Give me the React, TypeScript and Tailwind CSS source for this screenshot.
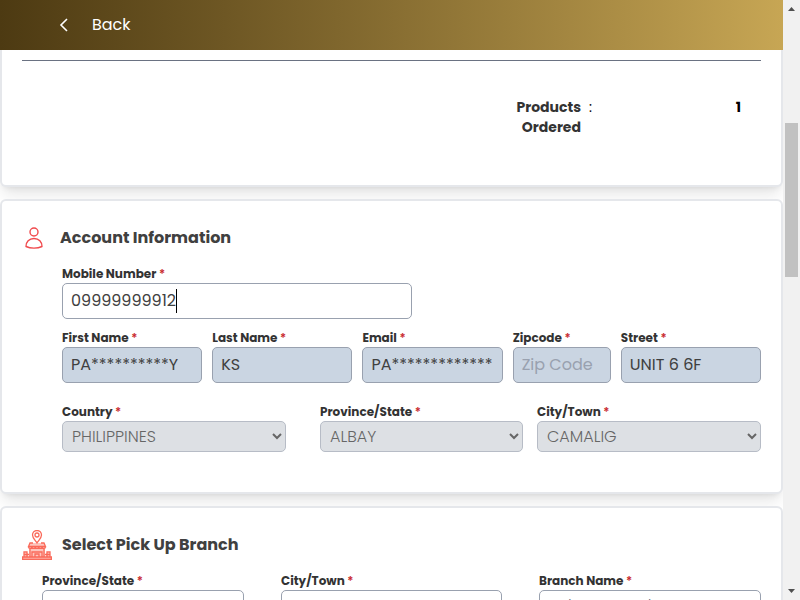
import type { ReactNode } from "react";

const INPUT =
  "h-9 w-full min-w-0 rounded-[5px] border border-gray-400 px-2 pb-0.5 text-base font-normal text-neutral-700 outline-none placeholder:text-gray-400";
const SELECT = "h-[31px] w-full min-w-0 rounded-[5px] border border-gray-400 pr-1.5 pl-[5px] text-base font-light";

function Field({ id, label, children }: { id: string; label: string; children: ReactNode }) {
  return (
    <div className="min-w-0">
      <label htmlFor={id} className="block h-[18px] text-xs leading-[18px] font-bold whitespace-nowrap text-[#333]">
        {label} <span className="font-semibold text-[#c8282d]">*</span>
      </label>
      {children}
    </div>
  );
}

function LockedInput({ id, label, value, placeholder }: { id: string; label: string; value: string; placeholder?: string }) {
  return (
    <Field id={id} label={label}>
      <input id={id} disabled value={value} placeholder={placeholder} className={`${INPUT} bg-slate-300`} />
    </Field>
  );
}

function LockedSelect({ id, label, value }: { id: string; label: string; value: string }) {
  return (
    <Field id={id} label={label}>
      <select id={id} disabled className={`${SELECT} bg-[#cfd3d9] text-neutral-800 opacity-70`}>
        <option>{value}</option>
      </select>
    </Field>
  );
}

function BranchSelect({ id, label, prompt }: { id: string; label: string; prompt: string }) {
  return (
    <Field id={id} label={label}>
      <select id={id} className={`${SELECT} bg-white text-gray-500`}>
        <option>{prompt}</option>
      </select>
    </Field>
  );
}

function UserIcon() {
  return (
    <svg viewBox="0 0 18 22" className="h-[22px] w-[18px]" fill="none" stroke="#f04a4d" strokeWidth="1.4" aria-hidden="true">
      <circle cx="9" cy="5" r="4" />
      <path d="M1 19.5c0-4.500 3-8 8-8s8 3.500 8 8c-4.500 2.200-11.500 2.200-16 0Z" strokeLinejoin="round" />
    </svg>
  );
}

function BranchIcon() {
  return (
    <svg viewBox="0 0 30 30" className="size-[30px]" fill="none" stroke="#fa6a5a" strokeWidth="1.300" aria-hidden="true">
      <path fill="#fdc5be" stroke="none" d="M7 17h16v10H7ZM2 23h4v4H2ZM24 23h4v4h-4ZM8 13h14l1.500 4h-17Z" />
      <path d="M15 13c-2-3-4.500-5-4.500-8a4.500 4.500 0 0 1 9 0c0 3-2.500 5-4.500 8Z" />
      <circle cx="15" cy="5" r="2" />
      <path d="M11 13H8l-1.500 3.500h17L22 13h-3" />
      <path d="M6.500 16.500c0 2.500 3.400 2.500 3.400 0 0 2.500 3.400 2.500 3.400 0 0 2.500 3.400 2.500 3.400 0 0 2.500 3.400 2.500 3.400 0 0 2.500 3.400 2.500 3.400 0" />
      <path d="M8 18.500v8.500m14-8.500v8.500M10 27v-5h10v5M13 27v-3h4v3" />
      <path d="M2 27v-5h3v5M25 27v-5h3v5M2 24.500h5m16 0h5" />
      <path fill="#fcb1a8" d="M.6 27h28.800v2.400H.6Z" />
    </svg>
  );
}

function Scrollbar() {
  return (
    <div className="flex w-[17px] shrink-0 flex-col items-center bg-[#f1f1f1]" aria-hidden="true">
      <svg viewBox="0 0 17 17" className="size-[17px]" fill="#505050">
        <path d="M5 11 8.500 7 12 11Z" />
      </svg>
      <div className="h-[106px]" />
      <div className="h-[154px] w-[13px] bg-[#c1c1c1]" />
      <div className="flex-1" />
      <svg viewBox="0 0 17 17" className="size-[17px]" fill="#505050">
        <path d="M5 6 8.500 10 12 6Z" />
      </svg>
    </div>
  );
}

const CARD = "rounded-md border-2 border-gray-200 bg-white shadow-lg";

export default function App() {
  return (
    <div className="flex h-screen overflow-hidden font-['Poppins','Inter',sans-serif]">
      <div className="flex min-w-0 flex-1 flex-col">
        <header className="flex h-[50px] shrink-0 items-center bg-linear-to-r from-[#4d3a12] to-[#c7a654] pl-14 text-white">
          <button type="button" className="flex items-center gap-5 text-base font-normal">
            <svg viewBox="0 0 16 16" className="size-4" fill="none" stroke="currentColor" strokeWidth="1.600" aria-hidden="true">
              <path d="m11 2-6 6 6 6" />
            </svg>
            Back
          </button>
        </header>

        <main className="flex min-h-0 flex-1 flex-col gap-3 overflow-hidden bg-white">
          <section className="shrink-0 rounded-b-md border-2 border-t-0 border-gray-200 bg-white px-5 pt-[10px] pb-12 shadow-lg">
            <hr className="border-gray-500" />
            <dl className="mt-9 flex justify-end pr-5 text-sm leading-5 font-bold">
              <dt className="w-20 text-right text-[#333]">Products Ordered</dt>
              <dd className="flex w-40 justify-between pl-2 text-black">
                <span className="font-normal">:</span>
                <span>1</span>
              </dd>
            </dl>
          </section>

          <section className={`${CARD} shrink-0 px-5 pt-[25px] pb-10`}>
            <h2 className="flex items-center gap-[17px] pl-[3px] text-base leading-6 font-bold text-neutral-700">
              <UserIcon />
              Account Information
            </h2>
            <div className="mt-[15px] ml-10 flex flex-col">
              <div className="w-1/2">
                <Field id="mobile" label="Mobile Number">
                  <div className="relative">
                    <input id="mobile" defaultValue="09999999912" className={`${INPUT} bg-white caret-transparent`} />
                    <span className="absolute top-1.5 left-[114px] h-6 w-px bg-black" aria-hidden="true" />
                  </div>
                </Field>
              </div>
              <div className="mt-[10px] grid grid-cols-[10fr_10fr_10fr_7fr_10fr] gap-[10px]">
                <LockedInput id="first-name" label="First Name" value="PA**********Y" />
                <LockedInput id="last-name" label="Last Name" value="KS" />
                <LockedInput id="email" label="Email" value="PA*************" />
                <LockedInput id="zipcode" label="Zipcode" value="" placeholder="Zip Code" />
                <LockedInput id="street" label="Street" value="UNIT 6 6F" />
              </div>
              <div className="mt-5 flex gap-[14px]">
                <div className="mr-5 flex-[224]">
                  <LockedSelect id="country" label="Country" value="PHILIPPINES" />
                </div>
                <div className="flex-[203]">
                  <LockedSelect id="province" label="Province/State" value="ALBAY" />
                </div>
                <div className="flex-[224]">
                  <LockedSelect id="city" label="City/Town" value="CAMALIG" />
                </div>
              </div>
            </div>
          </section>

          <section className={`${CARD} shrink-0 px-5 pt-[22px] pb-10`}>
            <h2 className="flex items-center gap-[10px] text-base leading-6 font-bold text-neutral-700">
              <BranchIcon />
              Select Pick Up Branch
            </h2>
            <div className="mt-3 ml-5 grid grid-cols-[202fr_221fr_222fr] gap-[37px]">
              <BranchSelect id="branch-province" label="Province/State" prompt="METRO MANILA" />
              <BranchSelect id="branch-city" label="City/Town" prompt="CALOOCAN" />
              <BranchSelect id="branch-name" label="Branch Name" prompt="Select Branch" />
            </div>
          </section>
        </main>
      </div>
      <Scrollbar />
    </div>
  );
}
